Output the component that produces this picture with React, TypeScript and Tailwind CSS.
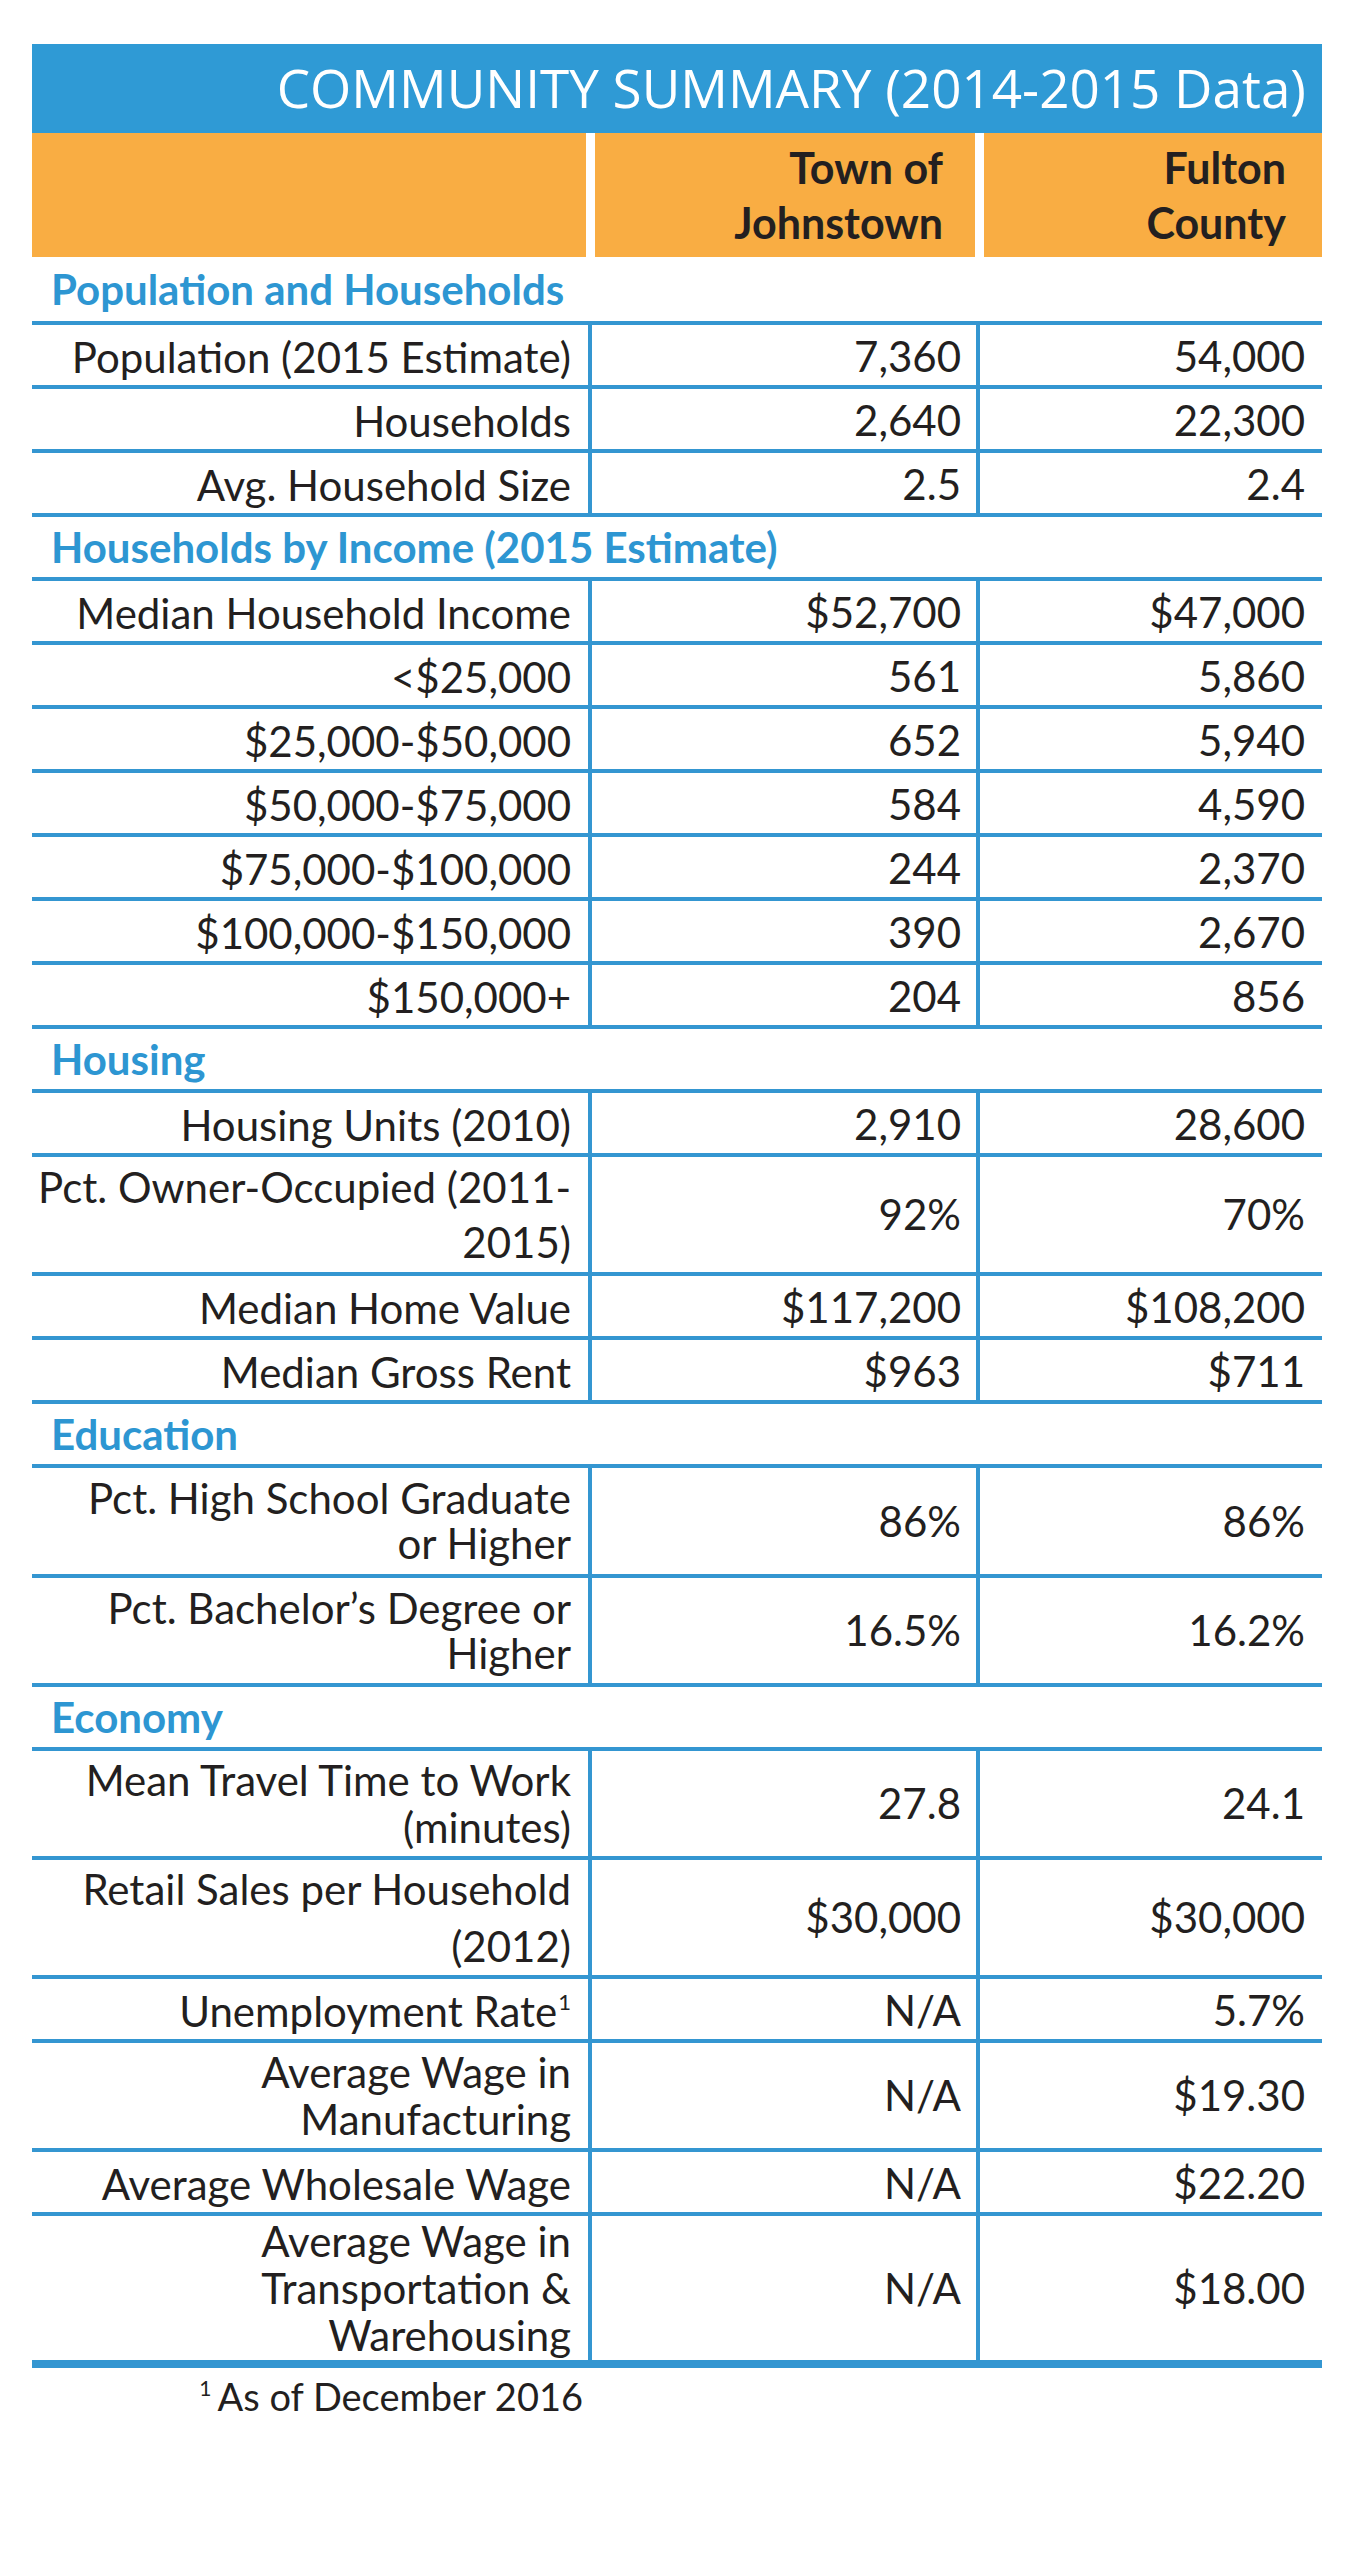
import React from "react";

type Row = {
  label: React.ReactNode;
  town: string;
  county: string;
  h?: string;
  lh?: string;
};

type Section = {
  title: string;
  first?: boolean;
  rows: Row[];
};

const sections: Section[] = [
  {
    title: "Population and Households",
    first: true,
    rows: [
      { label: "Population (2015 Estimate)", town: "7,360", county: "54,000" },
      { label: "Households", town: "2,640", county: "22,300" },
      { label: "Avg. Household Size", town: "2.5", county: "2.4" },
    ],
  },
  {
    title: "Households by Income (2015 Estimate)",
    rows: [
      { label: "Median Household Income", town: "$52,700", county: "$47,000" },
      { label: "<$25,000", town: "561", county: "5,860" },
      { label: "$25,000-$50,000", town: "652", county: "5,940" },
      { label: "$50,000-$75,000", town: "584", county: "4,590" },
      { label: "$75,000-$100,000", town: "244", county: "2,370" },
      { label: "$100,000-$150,000", town: "390", county: "2,670" },
      { label: "$150,000+", town: "204", county: "856" },
    ],
  },
  {
    title: "Housing",
    rows: [
      { label: "Housing Units (2010)", town: "2,910", county: "28,600" },
      {
        label: (
          <>
            Pct. Owner-Occupied (2011-
            <br />
            2015)
          </>
        ),
        town: "92%",
        county: "70%",
        h: "h-[119px]",
        lh: "leading-[55px]",
      },
      { label: "Median Home Value", town: "$117,200", county: "$108,200" },
      { label: "Median Gross Rent", town: "$963", county: "$711" },
    ],
  },
  {
    title: "Education",
    rows: [
      {
        label: (
          <>
            Pct. High School Graduate
            <br />
            or Higher
          </>
        ),
        town: "86%",
        county: "86%",
        h: "h-[110px]",
        lh: "leading-[45px]",
      },
      {
        label: (
          <>
            Pct. Bachelor’s Degree or
            <br />
            Higher
          </>
        ),
        town: "16.5%",
        county: "16.2%",
        h: "h-[109px]",
        lh: "leading-[45px]",
      },
    ],
  },
  {
    title: "Economy",
    rows: [
      {
        label: (
          <>
            Mean Travel Time to Work
            <br />
            (minutes)
          </>
        ),
        town: "27.8",
        county: "24.1",
        h: "h-[109px]",
        lh: "leading-[47px]",
      },
      {
        label: (
          <>
            Retail Sales per Household
            <br />
            (2012)
          </>
        ),
        town: "$30,000",
        county: "$30,000",
        h: "h-[119px]",
        lh: "leading-[57px]",
      },
      {
        label: (
          <>
            Unemployment Rate
            <sup className="text-[22px] -top-[17px] ml-[1px]">1</sup>
          </>
        ),
        town: "N/A",
        county: "5.7%",
      },
      {
        label: (
          <>
            Average Wage in
            <br />
            Manufacturing
          </>
        ),
        town: "N/A",
        county: "$19.30",
        h: "h-[109px]",
        lh: "leading-[47px]",
      },
      { label: "Average Wholesale Wage", town: "N/A", county: "$22.20" },
      {
        label: (
          <>
            Average Wage in
            <br />
            Transportation &amp;
            <br />
            Warehousing
          </>
        ),
        town: "N/A",
        county: "$18.00",
        h: "h-[152px]",
        lh: "leading-[47px]",
      },
    ],
  },
];

const App = () => {
  return (
    <div className="min-h-screen bg-white pt-[44px] pb-10 font-['Lato',sans-serif] text-[#231f20]">
      <div className="ml-[32px] w-[1290px]">
        <div className="h-[89px] bg-[#2f9ad5] flex items-center justify-end pr-[16px] pb-[2px] font-['Open_Sans',sans-serif] text-[53px] font-normal text-white whitespace-nowrap">
          COMMUNITY SUMMARY (2014-2015 Data)
        </div>

        <div className="grid grid-cols-[554px_380px_338px] gap-x-[9px] h-[124px]">
          <div className="bg-[#f9ad43]" />
          <div className="bg-[#f9ad43] flex items-center justify-end pr-[32px] text-right text-[43px] leading-[55px] font-bold">
            <div>
              Town of
              <br />
              Johnstown
            </div>
          </div>
          <div className="bg-[#f9ad43] flex items-center justify-end pr-[36px] text-right text-[43px] leading-[55px] font-bold">
            <div>
              Fulton
              <br />
              County
            </div>
          </div>
        </div>

        {sections.map((section) => (
          <div key={section.title}>
            <div
              className={`${section.first ? "h-[68px]" : "h-[64px]"} flex items-center pl-[19px] border-b-4 border-[#3496d1] text-[42px] font-bold text-[#2d96d2] whitespace-nowrap`}
            >
              {section.title}
            </div>
            {section.rows.map((row, i) => {
              const last = section.title === "Economy" && i === section.rows.length - 1;
              return (
                <div
                  key={i}
                  className={`grid grid-cols-[560px_388px_342px] ${row.h ?? "h-[64px]"} ${last ? "border-b-8" : "border-b-4"} border-[#3496d1] text-[42px]`}
                >
                  <div
                    className={`flex items-center justify-end pr-[17px] border-r-4 border-[#3496d1] text-right whitespace-nowrap ${row.lh ?? "leading-[48px]"}`}
                  >
                    <div>{row.label}</div>
                  </div>
                  <div className="flex items-center justify-end pr-[15px] border-r-4 border-[#3496d1]">
                    {row.town}
                  </div>
                  <div className="flex items-center justify-end pr-[17px]">{row.county}</div>
                </div>
              );
            })}
          </div>
        ))}

        <div className="w-[551px] flex justify-end pt-[6px] text-[38px] leading-[44px]">
          <span>
            <sup className="text-[21px] -top-[15px] mr-[6px]">1</sup>As of December 2016
          </span>
        </div>
      </div>
    </div>
  );
};

export default App;
